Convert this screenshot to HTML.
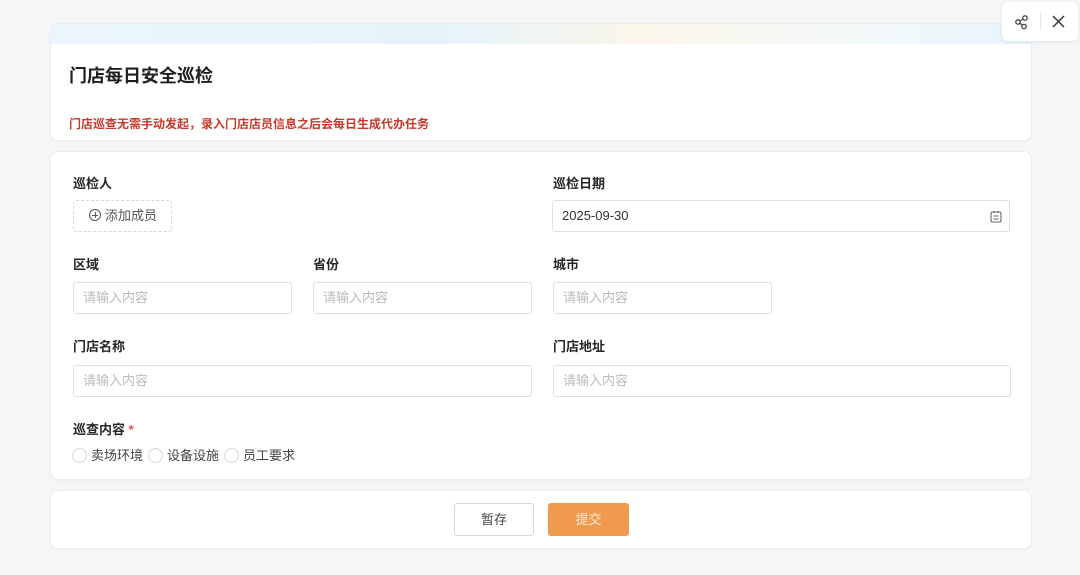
<!DOCTYPE html><html><head><meta charset="utf-8"><style>
*{box-sizing:border-box;margin:0;padding:0}
body{width:1080px;height:575px;background:#f5f6f8;font-family:"Liberation Sans","Noto Sans CJK SC",sans-serif;position:relative;overflow:hidden;color:#222}
.a{position:absolute}
.card{position:absolute;left:50px;width:982px;background:#fff;border-radius:8px;border:1px solid #eceef1;box-shadow:0 1px 3px rgba(0,0,0,.03)}
.lbl{position:absolute;font-size:13px;font-weight:bold;color:#262626;line-height:16px}
.inp{position:absolute;height:32px;border:1px solid #dcdfe4;border-radius:3px;font-size:13px;color:#bbb;padding-left:9px;line-height:30px;background:#fff}
.rad{position:absolute;top:448px;font-size:13px;color:#444;line-height:16px}
.rad i{display:inline-block;width:15px;height:15px;border:1px solid #d5d8dd;border-radius:50%;vertical-align:-3px;margin-right:4px}
</style></head><body>
<div class="card" style="top:23px;height:118px;overflow:hidden">
<div class="a" style="left:0;top:0;width:100%;height:20px;background:linear-gradient(90deg,#eaf6fb 0%,#e6f4fa 40%,#fbf6ea 60%,#f2f8fb 85%,#e8f5fa 100%)"></div>
<div class="a" style="left:18px;top:38px;font-size:18px;font-weight:bold;color:#1f1f1f">门店每日安全巡检</div>
<div class="a" style="left:18px;top:91px;font-size:12px;font-weight:bold;color:#c8392b">门店巡查无需手动发起，录入门店店员信息之后会每日生成代办任务</div>
</div>
<div class="a" style="left:1002px;top:2px;width:76px;height:39px;background:#fff;border-radius:6px;box-shadow:0 1px 4px rgba(0,0,0,.08)">
<svg class="a" style="left:12px;top:12px" width="16" height="16" viewBox="0 0 16 16" fill="none" stroke="#444" stroke-width="1.3"><circle cx="11" cy="4" r="2.2"/><circle cx="4" cy="8" r="2.2"/><circle cx="10" cy="12.5" r="2.2"/><path d="M6 7L9 5M6 9l2.3 2.3"/></svg>
<div class="a" style="left:38px;top:11px;width:1px;height:17px;background:#e5e5e5"></div>
<svg class="a" style="left:49px;top:12px" width="15" height="15" viewBox="0 0 15 15" stroke="#333" stroke-width="1.5"><path d="M2 2L13 13M13 2L2 13"/></svg>
</div>
<div class="card" style="top:151px;height:329px"></div>
<div class="lbl" style="left:73px;top:176px">巡检人</div>
<div class="a" style="left:73px;top:200px;width:99px;height:32px;border:1px dashed #d5d8dd;border-radius:3px;font-size:13px;color:#555;line-height:30px;padding-left:15px"><span style="display:inline-block;width:12px;height:12px;border:1.3px solid #555;border-radius:50%;vertical-align:-1px;position:relative;margin-right:4px"><span class="a" style="left:2px;top:4.5px;width:6px;height:1.3px;background:#555"></span><span class="a" style="left:4.5px;top:2px;width:1.3px;height:6px;background:#555"></span></span>添加成员</div>
<div class="lbl" style="left:553px;top:176px">巡检日期</div>
<div class="inp" style="left:552px;top:200px;width:458px;color:#333">2025-09-30
<svg class="a" style="left:437px;top:9px" width="12" height="13" viewBox="0 0 12 13" fill="none" stroke="#666" stroke-width="1.1"><rect x="1" y="2" width="10" height="10" rx="1.5"/><path d="M4 1v2M8 1v2M3.5 6h5M3.5 9h5"/></svg></div>
<div class="lbl" style="left:73px;top:257px">区域</div>
<div class="lbl" style="left:313px;top:257px">省份</div>
<div class="lbl" style="left:553px;top:257px">城市</div>
<div class="inp" style="left:73px;top:282px;width:219px">请输入内容</div>
<div class="inp" style="left:313px;top:282px;width:219px">请输入内容</div>
<div class="inp" style="left:553px;top:282px;width:219px">请输入内容</div>
<div class="lbl" style="left:73px;top:339px">门店名称</div>
<div class="lbl" style="left:553px;top:339px">门店地址</div>
<div class="inp" style="left:73px;top:365px;width:459px">请输入内容</div>
<div class="inp" style="left:553px;top:365px;width:458px">请输入内容</div>
<div class="lbl" style="left:73px;top:422px">巡查内容 <span style="color:#e0533d">*</span></div>
<div class="rad" style="left:72px"><i></i>卖场环境</div>
<div class="rad" style="left:148px"><i></i>设备设施</div>
<div class="rad" style="left:224px"><i></i>员工要求</div>
<div class="card" style="top:490px;height:59px"></div>
<div class="a" style="left:454px;top:503px;width:80px;height:33px;border:1px solid #d5d8dd;border-radius:3px;background:#fff;text-align:center;line-height:31px;font-size:13px;color:#444">暂存</div>
<div class="a" style="left:548px;top:503px;width:81px;height:33px;border-radius:3px;background:#ef9a4c;text-align:center;line-height:33px;font-size:13px;color:#fde9d6">提交</div>
</body></html>
